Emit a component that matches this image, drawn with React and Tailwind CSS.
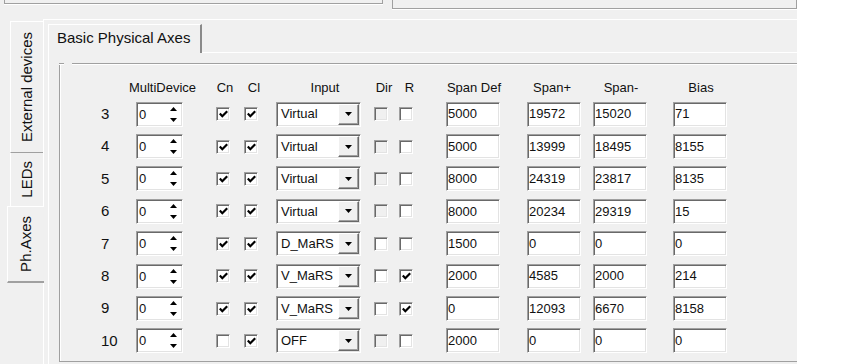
import React from 'react';

const rows = [
  { n: 3, cn: true, cl: true, input: 'Virtual', dirOn: false, r: false, def: '5000', sp: '19572', sm: '15020', bias: '71' },
  { n: 4, cn: true, cl: true, input: 'Virtual', dirOn: false, r: false, def: '5000', sp: '13999', sm: '18495', bias: '8155' },
  { n: 5, cn: true, cl: true, input: 'Virtual', dirOn: false, r: false, def: '8000', sp: '24319', sm: '23817', bias: '8135' },
  { n: 6, cn: true, cl: true, input: 'Virtual', dirOn: false, r: false, def: '8000', sp: '20234', sm: '29319', bias: '15' },
  { n: 7, cn: true, cl: true, input: 'D_MaRS', dirOn: true, r: false, def: '1500', sp: '0', sm: '0', bias: '0' },
  { n: 8, cn: true, cl: true, input: 'V_MaRS', dirOn: true, r: true, def: '2000', sp: '4585', sm: '2000', bias: '214' },
  { n: 9, cn: true, cl: true, input: 'V_MaRS', dirOn: true, r: true, def: '0', sp: '12093', sm: '6670', bias: '8158' },
  { n: 10, cn: false, cl: true, input: 'OFF', dirOn: false, r: false, def: '2000', sp: '0', sm: '0', bias: '0' },
];

// classic sunken 3d edge
const sunken =
  'border border-t-[#a0a0a0] border-l-[#a0a0a0] border-r-white border-b-white shadow-[inset_1px_1px_0_#696969,inset_-1px_-1px_0_#e3e3e3]';

const CheckBox = ({ checked, disabled, className = '' }) => (
  <div
    className={`w-[14px] h-[14px] shrink-0 flex items-center justify-center ${sunken} ${
      disabled ? 'bg-[#f0f0f0]' : 'bg-white'
    } ${className}`}
  >
    {checked && (
      <svg width="9" height="8" viewBox="0 0 9 8">
        <path d="M0.8 3.6 L3.3 6.2 L8.2 1.2" stroke="#000" strokeWidth="2.2" fill="none" />
      </svg>
    )}
  </div>
);

const SpinBox = ({ value }) => (
  <div className={`w-[47px] h-[25px] shrink-0 bg-white flex items-center ${sunken}`}>
    <span className="flex-1 pl-[2px] text-[13px] leading-none">{value}</span>
    <div className="flex flex-col items-center gap-[7px] mr-[5px]">
      <svg width="7" height="4" viewBox="0 0 7 4">
        <path d="M0 4 L3.5 0 L7 4Z" fill="#000" />
      </svg>
      <svg width="7" height="4" viewBox="0 0 7 4">
        <path d="M0 0 L7 0 L3.5 4Z" fill="#000" />
      </svg>
    </div>
  </div>
);

const Combo = ({ value }) => (
  <div className={`ml-[18px] w-[85px] h-[25px] shrink-0 bg-white flex p-[1px] ${sunken}`}>
    <span className="flex-1 flex items-center pl-[3px] text-[13px]">{value}</span>
    <div className="w-[21px] bg-[#f0f0f0] border border-t-white border-l-white border-r-[#696969] border-b-[#696969] shadow-[inset_-1px_-1px_0_#a0a0a0] flex items-center justify-center">
      <svg width="7" height="4" viewBox="0 0 7 4">
        <path d="M0 0 L7 0 L3.5 4Z" fill="#000" />
      </svg>
    </div>
  </div>
);

const Field = ({ value, className = '' }) => (
  <div className={`w-[54px] h-[25px] shrink-0 bg-white flex items-center pl-[1px] text-[13px] ${sunken} ${className}`}>
    {value}
  </div>
);

const VTab = ({ label, className = '' }) => (
  <div className={`flex items-center justify-center ${className}`}>
    <span className="[writing-mode:vertical-rl] rotate-180 text-[15px] whitespace-nowrap">{label}</span>
  </div>
);

export default function App() {
  return (
    <div className="w-[865px] h-[364px] overflow-hidden bg-white flex font-['Liberation_Sans',Arial,sans-serif] text-[#111]">
      <div className="w-[797px] h-full bg-[#f0f0f0] flex flex-col overflow-hidden">
        {/* strip of the panels above */}
        <div className="h-[19px] shrink-0 flex items-start">
          <div className="ml-[4px] w-[379px] h-[4px] border-l border-r border-b border-[#a0a0a0] shadow-[0_1px_0_white]" />
          <div className="ml-[9px] w-[405px] h-[9px] border-l border-r border-b border-[#a0a0a0] shadow-[0_1px_0_white]" />
        </div>

        <div className="flex flex-1 min-h-0">
          {/* vertical tabs */}
          <div className="w-[43px] shrink-0 flex flex-col">
            <VTab
              label="External devices"
              className="mt-[2px] ml-[10px] w-[33px] h-[132px] border-l border-t border-white border-b border-b-[#a0a0a0]"
            />
            <VTab label="LEDs" className="ml-[10px] w-[33px] h-[53px] border-l border-white" />
            <VTab
              label="Ph.Axes"
              className="relative z-10 ml-[7px] w-[37px] h-[77px] bg-[#f0f0f0] border-l border-t border-white border-b-2 border-b-[#a0a0a0] pl-[1px]"
            />
          </div>

          {/* outer tab page */}
          <div className="flex-1 min-w-0 border-t border-l border-white pt-[4px] pl-[4px] flex flex-col">
            <div className="h-[29px] shrink-0 flex">
              <div className="w-[154px] border-l border-t border-white border-r-2 border-r-[#8a8a8a] flex items-center pl-[8px] pb-[2px] text-[15px] whitespace-nowrap">
                Basic Physical Axes
              </div>
              <div className="flex-1 border-b border-white" />
            </div>

            <div className="flex-1 min-h-0 border-l border-white">
              {/* group box */}
              <div className="ml-[10px] mt-[10px] w-[760px] flex flex-col">
                <div className="flex h-[2px]">
                  <div className="w-[5px] border-t border-b border-t-[#a0a0a0] border-b-white" />
                  <div className="w-[8px]" />
                  <div className="flex-1 border-t border-b border-t-[#a0a0a0] border-b-white" />
                </div>
                <div className="border-l border-l-[#a0a0a0] shadow-[inset_1px_0_0_white] border-b border-b-[#a0a0a0] pb-[4px]">
                  <div className="mt-[13px] h-[20px] flex items-center text-[13px] whitespace-nowrap">
                    <span className="ml-[67px] w-[71px] text-center">MultiDevice</span>
                    <span className="ml-[15px] w-[24px] text-center">Cn</span>
                    <span className="ml-[6px] w-[22px] text-center">Cl</span>
                    <span className="ml-[40px] w-[40px] text-center">Input</span>
                    <span className="ml-[29px] w-[20px] text-center">Dir</span>
                    <span className="ml-[5px] w-[21px] text-center">R</span>
                    <span className="ml-[23px] w-[62px] text-center">Span Def</span>
                    <span className="ml-[22px] w-[50px] text-center">Span+</span>
                    <span className="ml-[19px] w-[50px] text-center">Span-</span>
                    <span className="ml-[35px] w-[40px] text-center">Bias</span>
                  </div>

                  {rows.map((r) => (
                    <div key={r.n} className="h-[32.4px] flex items-center">
                      <span className="ml-[41px] w-[35px] shrink-0 text-[15px]">{r.n}</span>
                      <SpinBox value="0" />
                      <CheckBox checked={r.cn} className="ml-[33px]" />
                      <CheckBox checked={r.cl} className="ml-[14px]" />
                      <Combo value={r.input} />
                      <CheckBox disabled={!r.dirOn} className="ml-[13px]" />
                      <CheckBox checked={r.r} className="ml-[11px]" />
                      <Field value={r.def} className="ml-[33px]" />
                      <Field value={r.sp} className="ml-[27px]" />
                      <Field value={r.sm} className="ml-[12px]" />
                      <Field value={r.bias} className="ml-[26px]" />
                    </div>
                  ))}
                </div>
              </div>
            </div>
          </div>
        </div>
      </div>
      <div className="flex-1 bg-white" />
    </div>
  );
}
